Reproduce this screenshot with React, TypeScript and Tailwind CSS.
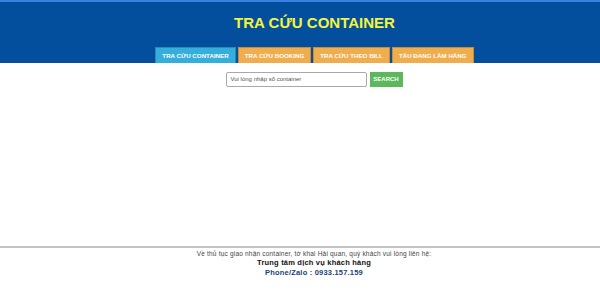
import React from "react";

export default function App() {
  const tabs = [
    { label: "TRA CỨU CONTAINER", active: true },
    { label: "TRA CỨU BOOKING", active: false },
    { label: "TRA CỨU THEO BILL", active: false },
    { label: "TÀU ĐANG LÀM HÀNG", active: false },
  ];
  return (
    <div
      className="w-[600px] h-[298px] bg-white flex flex-col overflow-hidden"
      style={{ fontFamily: '"Liberation Sans", Arial, sans-serif' }}
    >
      <div className="bg-[#034f9e] border-t-[2px] border-[#3b82e0] h-[63px] flex flex-col pl-[29px]">
        <div className="h-[41px] flex items-center justify-center">
          <h1 className="text-[15px] font-bold text-[#f4f53a] leading-none">TRA CỨU CONTAINER</h1>
        </div>
        <div className="flex justify-center gap-[2px] mt-auto">
          {tabs.map((t) => (
            <div
              key={t.label}
              className={
                t.active
                  ? "h-[16px] px-[6px] flex items-center bg-[#35aedc] border border-[#2a8cb3] border-b-0 text-white text-[6.2px] font-bold"
                  : "h-[16px] px-[6px] flex items-center bg-[#f0ad4e] border border-[#c88d3a] border-b-0 text-white text-[6.2px] font-bold"
              }
            >
              {t.label}
            </div>
          ))}
        </div>
      </div>
      <div className="flex-1 flex justify-center pl-[28px] pt-[9px]">
        <div className="flex gap-[3px] h-[15px]">
          <div className="w-[141px] h-[15px] border border-[#a9a9a9] rounded-[2px] flex items-center px-[4px] text-[6px] text-[#555]">
            Vui lòng nhập số container
          </div>
          <div className="w-[33px] h-[15px] bg-[#5cb85c] flex items-center justify-center text-white text-[6px] font-bold">
            SEARCH
          </div>
        </div>
      </div>
      <div className="border-t-[2px] border-[#c4c4c4] h-[52px] flex flex-col items-center pl-[28px] pt-[1px]">
        <div className="text-[6.5px] text-[#444] leading-[9px] tracking-[0.2px]">
          Về thủ tục giao nhận container, tờ khai Hải quan, quý khách vui lòng liên hệ:
        </div>
        <div className="text-[7.5px] font-bold text-[#111] leading-[10px] tracking-[0.2px]">
          Trung tâm dịch vụ khách hàng
        </div>
        <div className="text-[7.5px] font-bold text-[#1b3f74] leading-[10px] tracking-[0.2px]">
          Phone/Zalo : 0933.157.159
        </div>
      </div>
    </div>
  );
}
